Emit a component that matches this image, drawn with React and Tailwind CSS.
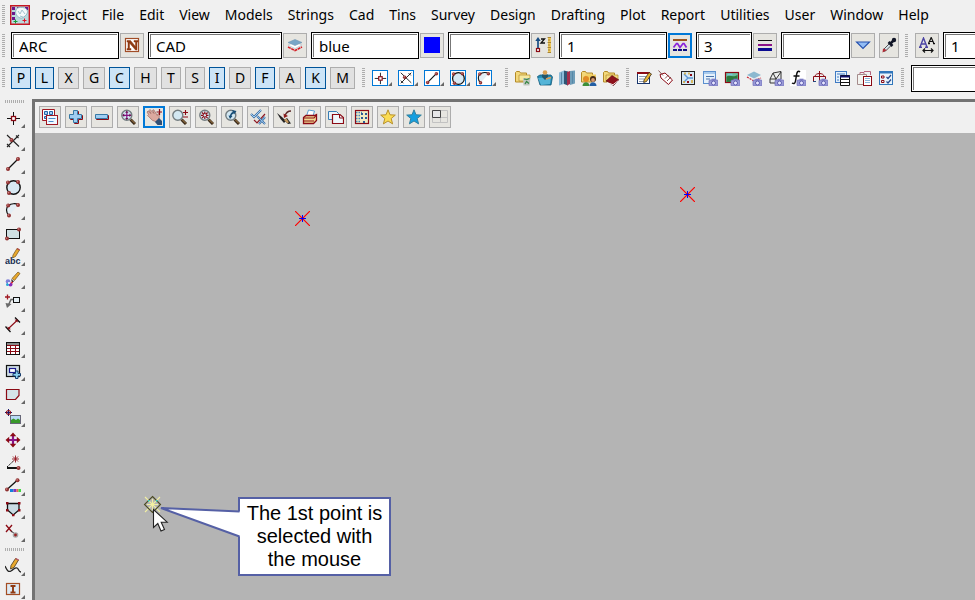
import clsx from 'clsx'

const menus = [
  'Project', 'File', 'Edit', 'View', 'Models', 'Strings', 'Cad', 'Tins', 'Survey',
  'Design', 'Drafting', 'Plot', 'Report', 'Utilities', 'User', 'Window', 'Help'
]

const snaps = [
  { key: 'P', on: true, width: 'w-5' },
  { key: 'L', on: true, width: 'w-[19px]' },
  { key: 'X', width: 'w-[21px]' },
  { key: 'G', width: 'w-[22px]' },
  { key: 'C', on: true, width: 'w-[21px]' },
  { key: 'H', width: 'w-[23px]' },
  { key: 'T', width: 'w-5' },
  { key: 'S', width: 'w-5' },
  { key: 'I', on: true, width: 'w-4' },
  { key: 'D', width: 'w-[22px]' },
  { key: 'F', on: true, width: 'w-5' },
  { key: 'A', width: 'w-[22px]' },
  { key: 'K', on: true, width: 'w-[21px]' },
  { key: 'M', width: 'w-[25px]' }
]

const RED = '#8b0a14'
const SKY = '#9fcdf2'

function Svg({ children, className = 'size-4', box = '0 0 16 16' }) {
  return (
    <svg viewBox={box} className={clsx('block shrink-0', className)} fill="none" aria-hidden="true">
      {children}
    </svg>
  )
}

function Dot({ x, y }) {
  return (
    <g>
      <circle cx={x} cy={y} r="2" fill="#8f3030" />
      <circle cx={x - 0.4} cy={y - 0.4} r="0.8" fill="#c98080" />
    </g>
  )
}

function Glass() {
  return (
    <g>
      <path d="M10.5 10.5 15 15" stroke="#3a2a1a" strokeWidth="3" />
      <path d="M11 10.5 15 14.5" stroke="#b58a50" strokeWidth="1" />
      <circle cx="6.8" cy="6.3" r="5" fill="#d3e8f2" stroke="#737d80" strokeWidth="1.4" />
    </g>
  )
}

function Camera() {
  return (
    <g>
      <rect x="7" y="10" width="9" height="6" rx="1" fill="#9a9ad8" stroke="#6c6cb4" strokeWidth=".7" />
      <rect x="9.5" y="8.7" width="4" height="1.5" fill="#7c7cc4" />
      <circle cx="11.5" cy="13" r="2" fill="#e6e6ff" stroke="#5555a8" strokeWidth=".9" />
    </g>
  )
}

function Folder() {
  return <path d="M.5 12V2.5l1-1h3l1 1.500h6V12Z" fill="#f3d87b" stroke="#b38a28" />
}

const icons = {
  // string creation
  point: (
    <g>
      <path d="M8.500 2v13M2 8.500h13" stroke="#111" />
      <rect x="6.500" y="6.500" width="4" height="4" fill="#fff" stroke={RED} strokeWidth="1.300" />
    </g>
  ),
  cross: (
    <g>
      <path d="m2 2 12 11.500M14 2 2 14M11 2.500l2.500 2.500M2 11l3 3" stroke="#222" strokeWidth="1.100" />
      <Dot x={6.5} y={7} />
    </g>
  ),
  line: (
    <g>
      <path d="m2.500 13.500 11-11" stroke="#111" strokeWidth="1.300" />
      <Dot x={3} y={13} />
      <Dot x={13} y={3} />
    </g>
  ),
  circle: (
    <g>
      <circle cx="8.500" cy="8.500" r="6.700" fill="#d8e9f3" stroke="#111" strokeWidth="1.400" />
      <Dot x={3} y={3.4} />
      <Dot x={13} y={3} />
      <Dot x={4} y={14} />
    </g>
  ),
  arc: (
    <g>
      <path d="M4 13C1 10 0.500 6 3.500 3.500S11 1 13 3L8 9Z" fill="#e4eef5" />
      <path d="M4 13.500C0.500 10 1 5.500 3.500 3.500S11 1 13 3" stroke="#111" strokeWidth="1.200" />
      <Dot x={3.2} y={3.4} />
      <Dot x={13} y={3} />
      <Dot x={4} y={13.5} />
    </g>
  ),
  rectangle: (
    <g>
      <rect x="1.500" y="4.500" width="13" height="9" fill="#cfe0e3" stroke="#111" />
      <Dot x={14} y={4.4} />
      <Dot x={2} y={13.6} />
    </g>
  ),
  text: (
    <g>
      <path d="m8 7 4-6.500 2.500 1.500-4 6.500L7.500 10Z" fill="#e9a92d" stroke="#70501c" strokeWidth=".7" />
      <path d="m11.500 1 1-1 2.500 1.500-.6 1Z" fill="#b04848" />
      <text x="0" y="15.500" fontFamily="Liberation Sans, sans-serif" fontSize="9" fontWeight="bold" fill="#152c50">abc</text>
    </g>
  ),
  brush: (
    <g>
      <path d="m7 7.500 6-6.500 2 1.500-5.500 7Z" fill="#e9a92d" stroke="#70501c" strokeWidth=".7" />
      <path d="m6 8 3 2.500-2 1Z" fill="#222" />
      <circle cx="3" cy="10.500" r="2.300" fill="#7f7fd8" />
      <circle cx="5.500" cy="13.500" r="2" fill="#8a2bb8" />
      <circle cx="2.500" cy="13.500" r="1.500" fill="#2aa7d8" />
      <circle cx="4" cy="12" r="1.100" fill="#fff" />
      <path d="M6 11.500h2" stroke="#d63a3a" strokeWidth="1.500" />
    </g>
  ),
  leader: (
    <g>
      <path d="M2.500.5v5M0 3h5" stroke="#a01822" strokeWidth="1.300" />
      <path d="M8.500 5.500H6L3 12" stroke="#666" strokeWidth="1.500" />
      <path d="m.5 9 6 1L2 14Z" fill="#6b6b6b" />
      <rect x="8.500" y="3.500" width="6" height="5" fill="#e6f0f5" stroke="#111" />
    </g>
  ),
  dimension: (
    <g>
      <path d="m.5 9.500 5 5.500M10 .5l5 5" stroke="#111" strokeWidth="1.300" />
      <path d="M3.500 11.500 12 3.500" stroke={RED} strokeWidth="1.100" />
      <path d="m2.500 9.500.5 3 3-.2zM12.800 5.500l-.3-3-3 .2z" fill={RED} />
    </g>
  ),
  grid: (
    <g>
      <rect x="1.500" y="2.500" width="13" height="12" fill="#fff" stroke="#111" />
      <path d="M2 4h12" stroke="#8a8a8a" strokeWidth="2" />
      <path d="M5.500 5v9M10.500 5v9M2 5.500h12M2 8.500h12M2 11.500h12" stroke={RED} />
    </g>
  ),
  insert: (
    <g>
      <rect x="1.500" y="2.500" width="13" height="11" fill="#cfdde6" stroke="#111" strokeWidth="1.200" />
      <rect x="4.500" y="5.500" width="6" height="4" fill="#fff" stroke="#1a1a8c" strokeWidth="1.200" />
      <path d="M10.500 8h2.500v2.500h2.500V13H13v2.500h-2.500V13H8v-2.500h2.500Z" fill="#8cd1ee" stroke="#173c6d" />
    </g>
  ),
  shape: (
    <path d="M1.500 3.500h12.500v6L10.500 13.500h-9Z" fill="#d5e3e8" stroke={RED} strokeWidth="1.200" />
  ),
  image: (
    <g>
      <path d="M3.500 0v7M0 3.500h7" stroke="#1a1a70" />
      <circle cx="3.500" cy="3.500" r="2" stroke={RED} strokeWidth="1.200" />
      <rect x="5.500" y="6.500" width="10" height="8" fill="#b9dcf7" stroke="#667" />
      <path d="M6 14v-3l2.500-1.500L11 11l2-1.500 2 1.500v3Z" fill="#38982a" />
    </g>
  ),
  move: (
    <g>
      <path d="M8 3v10M3 8h10" stroke="#8a1586" strokeWidth="2.200" />
      <path d="m8 .5 3.300 3.700H4.700ZM8 15.500l3.300-3.700H4.700ZM.5 8l3.700 3.300V4.700ZM15.500 8l-3.700 3.300V4.700Z" fill={RED} />
    </g>
  ),
  angle: (
    <g>
      <path d="M2 13h12" stroke="#111" strokeWidth="2" />
      <path d="m2 12 7-6.500" stroke="#111" strokeDasharray="2 1" />
      <path d="M10.500.5v7M7 4h7M8 1.500l5 5M13 1.500l-5 5" stroke="#941620" strokeWidth=".9" />
      <Dot x={13.5} y={13} />
    </g>
  ),
  colourLine: (
    <g>
      <path d="m2 11.500 10-9" stroke="#111" strokeWidth="1.300" />
      <Dot x={2} y={11.5} />
      <Dot x={12.5} y={2.3} />
      <path d="M5 12.500h3.500" stroke="#147fdb" strokeWidth="3" />
      <path d="M8.500 12.500h3" stroke="#8237b8" strokeWidth="3" />
      <path d="M11.500 12.500h2" stroke="#ed674b" strokeWidth="3" />
      <path d="M13.500 12.500H16" stroke="#42d742" strokeWidth="3" />
    </g>
  ),
  polygon: (
    <g>
      <path d="M2.500 2.500h11.500v6.500l-5.800 5-5.700-5Z" fill="#cadce4" stroke="#111" strokeWidth="1.300" />
      <path d="M1 1h2.500v2.500H1zM13 1h2.500v2.500H13zM1 8h2.500v2.500H1zM13 8h2.500v2.500H13zM7 13h2.500v2.300H7z" fill={RED} />
    </g>
  ),
  deletePoint: (
    <g>
      <path d="m1 1 6 7M7 1 1 8" stroke={RED} strokeWidth="1.300" />
      <path d="m6 7 4 3" stroke="#333" />
      <circle cx="10.500" cy="11" r="2.800" fill="#a7a7a7" />
      <circle cx="10.500" cy="11" r="1.400" fill="#9c2020" />
    </g>
  ),
  freehand: (
    <g>
      <path d="m6 7.500 4.500-7 3 1.500L9 9.500l-3.500 1.500Z" fill="#e9a92d" stroke="#493618" strokeWidth=".8" />
      <path d="m10 1 1-1 3 1.600-.8 1.200Z" fill="#b85a65" />
      <path d="M0 8c2 4 3 6.500 6 5s4-4 6-3 1.500 4 4 4" stroke="#222" strokeWidth="1.300" />
    </g>
  ),
  textBox: (
    <g>
      <rect x="1.500" y="2.500" width="13" height="11" fill="#ddeaf4" stroke="#a44d23" strokeWidth="1.200" />
      <path d="M5.500 5h5M8 5v7M5.500 11.500h5" stroke="#8f3a13" strokeWidth="1.900" />
    </g>
  ),

  // current settings
  name: (
    <g>
      <rect x="1.500" y="1.500" width="13" height="13" fill="#fff" stroke="#a14d27" strokeWidth="1.200" />
      <path d="M3 3.500h3.500l5 6V5H10V3.500h4V5h-1v8h-1.500L5.500 6v5.500H7V13H3v-1.500h1V5H3Z" fill="#8f3a13" stroke="#8f3a13" strokeWidth=".5" />
    </g>
  ),
  layers: (
    <g>
      <path d="M1 10 8 13.500l7-3.500" stroke="#d42028" strokeWidth="1.600" strokeDasharray="3 .6" />
      <path d="m1 8 7-3 7 3-7 3.500Z" fill="#fff" stroke="#b4c4d0" strokeWidth=".7" />
      <path d="m1 5.500 7-3 7 3-7 3Z" fill="#79a6c7" stroke="#7296b0" strokeWidth=".6" />
    </g>
  ),
  blue: <path d="M0 0h16v16H0z" fill="#0000ff" />,
  height: (
    <g>
      <path d="M3 3v9" stroke="#184d83" strokeWidth="1.700" />
      <path d="m3 0 2.700 4H.3Z" fill="#184d83" />
      <rect x="1.500" y="11.500" width="3" height="3" fill="#fff" stroke={RED} strokeWidth="1.200" />
      <path d="M6 2h3.500L6 6h4" stroke="#111" strokeWidth="1.300" />
      <path d="M13 0h3v16h-3z" fill="#edc75a" />
      <path d="M12.500.5H16M13 3h2M12.500 5.500H16M13 8h2M12.500 10.500H16M13 13h2M12.500 15.500H16" stroke="#8b6722" strokeWidth=".7" />
    </g>
  ),
  lineStyle: (
    <g>
      <path d="M1 3h14" stroke="#9a541f" strokeWidth="2" />
      <path d="m1.500 10.500 3-4h1l2.500 4 3-4h1l2.500 4" stroke="#8a22d8" strokeWidth="1.700" />
      <path d="M1 13h14" stroke="#101080" strokeWidth="2" strokeDasharray="4 1" />
    </g>
  ),
  weight: (
    <g>
      <path d="M1 3.500h14" stroke="#111" />
      <path d="M1 8h14" stroke="#8b1188" strokeWidth="2" />
      <path d="M1 12.500h14" stroke="#0a0a90" strokeWidth="3" />
    </g>
  ),
  dropDown: <path d="M1.500 5h13L8 11.500Z" fill="#93bdf5" stroke="#2551ae" strokeWidth="1.100" />,
  dropper: (
    <g>
      <path d="m3 12 6-6 1.800 1.800-6 6-2.300.7Z" fill="#d7e4eb" stroke="#555" />
      <path d="m7.500 5 4 4M9.500 6.500l3-3" stroke="#111627" strokeWidth="2.500" />
      <circle cx="13" cy="3" r="2.200" fill="#111627" />
      <path d="m1.500 15.500.5-4 4 1.500Z" fill="#b32b35" />
    </g>
  ),
  textSize: (
    <g>
      <path d="m1 10 3.500-9L8 10M2.200 7h4.600M0 10.200h3M6 10.200h3" stroke="#4b44a3" strokeWidth="1.400" />
      <path d="m9.500 6.500 2.700-6 2.700 6M10.500 4.500h3.500M9 6.700h2M14 6.700h2" stroke="#111" strokeWidth="1.200" />
      <path d="M4 13.500h10M6 11.500l-2 2 2 2M12 11.500l2 2-2 2" stroke="#111" strokeWidth="1.200" />
    </g>
  ),

  // project tools
  folderRecycle: (
    <g>
      <Folder />
      <path d="M4 5h11v3l-4 3H4Z" fill="#f6e9a0" stroke="#b38a28" strokeWidth=".7" />
      <path d="M8 8h7.500l-1 7.500H8.500Z" fill="#bfc6bf" />
      <path d="m9 9 3 .5 2.500-1M10 14l1.500-2.500 2.500 2" stroke="#31843f" strokeWidth="1.200" />
    </g>
  ),
  folderUser: (
    <g>
      <path d="M.5 6.500 3 5h11l1.500 2-1.500 8H3Z" fill="#2389b2" stroke="#145b7a" strokeWidth=".8" />
      <path d="m1 8 13-1-1 7-9 1Z" fill="#54b4d7" />
      <path d="M5 7V4.500h6V7l-3 3Z" fill="#24566b" />
      <circle cx="8" cy="2.500" r="2.300" fill="#dba052" />
      <path d="m9 9 5-1.500" stroke="#df9952" strokeWidth="1.500" />
    </g>
  ),
  books: (
    <g>
      <path d="m0 2.500 5-2V14l-5 1.500Z" fill="#8ebcd8" />
      <path d="m5 .5 4 1v14L5 14Z" fill="#2f5674" />
      <path d="m8 2 3-1v13l-3 1.500Z" fill="#a42e4c" />
      <path d="m11 1 5-.5v13l-5 1.500Z" fill="#6f9db8" />
      <path d="M2.500 2.500V14M13.500 1.500v12" stroke="#5688a8" />
    </g>
  ),
  folderPeople: (
    <g>
      <Folder />
      <path d="M4 4.500h11v6H4Z" fill="#f2cf63" />
      <circle cx="5" cy="9" r="3" fill="#e08b26" />
      <circle cx="12" cy="9" r="3" fill="#452919" />
      <circle cx="12" cy="10" r="1.900" fill="#d69970" />
      <path d="M1.500 16c0-5 7-5 7 0Z" fill="#3d8f38" />
      <path d="M8.500 16c0-5 7-5 7 0Z" fill="#245fa4" />
    </g>
  ),
  folderBook: (
    <g>
      <Folder />
      <path d="M3 5h12v6H3Z" fill="#f4da80" stroke="#b38a28" strokeWidth=".7" />
      <path d="m3 11 6-5.500 7 4.500-5.500 5.500Z" fill="#8d111b" stroke="#52060c" strokeWidth=".6" />
      <path d="m4 12.500 6 2.200 5.500-4.200" stroke="#fff" strokeWidth=".9" />
    </g>
  ),
  edit: (
    <g>
      <rect x="1.500" y="2.500" width="12" height="11" fill="#fff" stroke="#19366c" />
      <path d="M1 3h13" stroke={RED} strokeWidth="2" />
      <path d="M3 6.500h7M3 9h5M3 11.500h5" stroke="#8d9ab0" />
      <path d="m8 10 5-7.500 2.500 1.500-5 7.500-2.800 1Z" fill="#e9b634" stroke="#382b1c" strokeWidth=".8" />
    </g>
  ),
  tag: (
    <g>
      <path d="M2 4.500 7 3l7.500 7-4 4.500L3 8Z" fill="#fff" stroke={RED} />
      <path d="M.5.5 5 5.500M7 8.500l3.500-3.500M9 11l4-4" stroke="#6b3430" strokeWidth=".8" />
    </g>
  ),
  mapPoints: (
    <g>
      <rect x="1.500" y="1.500" width="13" height="13" fill="#d6e8f4" stroke="#222" />
      <path d="m4 4 4 4-4 4M8 8h5" stroke="#5b97d4" strokeWidth="1.400" />
      <path d="M5 2.500v2M9 2.500v2M12 10v3M4 11v2" stroke="#d8a72c" strokeWidth="1.500" />
      <path d="M10 4h2v2h-2zM7 11h2v2H7z" fill={RED} />
    </g>
  ),
  viewCamera: (
    <g>
      <rect x="1.500" y="1.500" width="12" height="12" fill="#e5f1fb" stroke="#5a8fce" />
      <path d="M1.500 3h12" stroke="#6ba3df" />
      <path d="M4 6.500h8M4 9h4" stroke="#4a74ac" />
      <Camera />
    </g>
  ),
  imageCamera: (
    <g>
      <rect x="1.500" y="2.500" width="13" height="10" fill="#6cc0a0" stroke={RED} strokeWidth="1.200" />
      <path d="M2.500 7c3-3 6 1 11-2v7h-11Z" fill="#2d7a3d" />
      <path d="M3.500 4.500h5" stroke="#79c4df" strokeWidth="1.500" />
      <Camera />
    </g>
  ),
  layerCamera: (
    <g>
      <path d="m1 7 7 4 7-3" stroke="#c82430" strokeWidth="1.200" strokeDasharray="2 1" />
      <path d="m1 5 7-3.500L15 5 8 8.500Z" fill="#8cb9d0" />
      <Camera />
    </g>
  ),
  meshCamera: (
    <g>
      <path d="m2 9 3-6 8-1.500V9l-5 4H2Zm0 0h6l5-7M5 3l3 6v4" fill="#e9ece9" stroke="#333" />
      <Camera />
    </g>
  ),
  functionCamera: (
    <g>
      <path d="M0 0h16v16H0z" fill="#fff" />
      <path d="M10 2C8 0 7 2 6.500 5l-1 6C5 14 3.500 14 2 13M3.500 6h6" stroke="#111" strokeWidth="1.500" />
      <Camera />
    </g>
  ),
  scaleCamera: (
    <g>
      <path d="M7.500 1v10M1.500 11V6.500h12V9M3 6.500c0-4 9-4 9 0" stroke={RED} />
      <path d="M1 11.500h3" stroke="#26497e" />
      <Camera />
    </g>
  ),
  listPanel: (
    <g>
      <rect x="1.500" y="1.500" width="11" height="11" fill="#e5f1fb" stroke="#407ac3" />
      <path d="M3 4h8M3 7h2M3 10h2" stroke="#407ac3" />
      <path d="M6.500 5.500h9v10h-9z" fill="#fff" stroke="#111" />
      <path d="M6 6.500h10" stroke="#11116a" strokeWidth="2" />
      <path d="M7 9.500h8M7 12.500h8" stroke="#111" />
    </g>
  ),
  clipboard: (
    <g>
      <path d="M1.500 4.500h9v10h-9Z" fill="#f3f3ef" stroke="#a58c8c" />
      <path d="M4 4V2.500h4V4M8 1.500h6.500V5" stroke="#b4647c" />
      <rect x="7.500" y="6.500" width="8" height="9" fill="#fff" stroke={RED} />
      <path d="M9 8.500h5M9 10.500h5M9 12.500h5" stroke="#8bb6da" />
    </g>
  ),
  checklist: (
    <g>
      <rect x="1.500" y="1.500" width="13" height="13" fill="#eaf4fb" stroke="#3076bb" />
      <path d="M1 2.500h14" stroke="#3076bb" strokeWidth="2" />
      <path d="M3.500 6h2.500v2H3.500zM3.500 10.500h2.500v2H3.500z" stroke={RED} />
      <path d="m8.500 7 1.500 1.500L13 5M8.500 11.500 10 13l3-3.500" stroke="#25468b" strokeWidth="1.200" />
    </g>
  ),

  // view tools
  menu: (
    <g>
      <path d="M.5.5h12v11H.5z" fill="#fff" stroke="#a01822" />
      <path d="M2.500 2.500h3v3h-3zM7.500 2.500h3v3h-3zM2.500 7.500h3v2h-3z" fill={SKY} stroke="#2364a5" />
      <rect x="4.500" y="6.500" width="11" height="9" fill="#f0f8ff" stroke="#a01822" />
      <path d="M6.500 9.500h7M6.500 12.500h5" stroke="#4a8bca" />
    </g>
  ),
  plus: (
    <g>
      <path d="M6.500 2.500h4v4h4v4h-4v4h-4v-4h-4v-4h4Z" stroke={RED} />
      <path d="M5.500 1.500h4v4h4v4h-4v4h-4v-4h-4v-4h4Z" fill={SKY} stroke="#3779a5" />
    </g>
  ),
  minus: (
    <g>
      <path d="M2.500 6.500h12v4h-12z" stroke={RED} />
      <path d="M1.500 5.500h12v4h-12z" fill={SKY} stroke="#3779a5" />
    </g>
  ),
  zoomFit: (
    <g>
      <Glass />
      <path d="M6.800 2.500v7.600M3 6.300h7.600" stroke="#861383" strokeWidth="1.200" />
      <path d="m6.800 1.700 1.700 2H5.100ZM6.800 11l1.700-2H5.100ZM2.200 6.300l2 1.700V4.600ZM11.400 6.300l-2 1.700V4.600Z" fill="#6b1050" />
    </g>
  ),
  pan: (
    <g>
      <path d="m1 3 1-1 3 2.500L3 1.500l1-1 4 4L6.500 1.300l1.200-.6 3.600 5.800.8-2 1.300.6-.4 5-3 2.600-3.500-1.300-5-5 1-1Z" fill="#dca99f" stroke="#98665f" strokeWidth=".7" />
      <path d="m9 13 4-4 3 3v4h-4.500Z" fill="#304f75" />
      <path d="M13.500 0v6M10.500 3h6" stroke={RED} strokeWidth="1.200" />
    </g>
  ),
  zoomInOut: (
    <g>
      <g transform="translate(-1 0)"><Glass /></g>
      <path d="M11 3.500h5M13.500 1v5M11 8h5" stroke={RED} strokeWidth="1.100" />
    </g>
  ),
  zoomExtent: (
    <g>
      <Glass />
      <path d="m4 3.500 2 2M9.600 3.500l-2 2M4 9.100l2-2M9.600 9.100l-2-2M6.800 2.500v2.500M6.800 7.600v2.500M3 6.300h2.500M8 6.300h2.500" stroke={RED} strokeWidth="1.200" />
    </g>
  ),
  zoomPrevious: (
    <g>
      <Glass />
      <path d="M6.500 8c0-2 .5-3.500 3-4.500" stroke="#174d76" strokeWidth="1.500" />
      <path d="m8 1 4.500 1L10 5.500ZM4.500 6.500l4 .5-2.500 3Z" fill="#174d76" />
    </g>
  ),
  ticks: (
    <g>
      <path d="m1 5 3 3 7-7" stroke="#3b6ea5" strokeWidth="2.200" />
      <path d="m1 5 3 3 7-7" stroke="#9fcdf2" />
      <path d="m4 11 3 3 8-9" stroke="#8d1822" strokeWidth="1.200" />
      <path d="m7 7 8 8M15 8l-6 7" stroke="#3b6ea5" strokeWidth="2" />
      <path d="m7 7 8 8M15 8l-6 7" stroke="#9fcdf2" strokeWidth=".8" />
    </g>
  ),
  paint: (
    <g>
      <path d="m1 4 5 4 4 4-2 2-3.500-4Z" fill="#242424" />
      <path d="m8 11 3-2 4 5.500-3 .5Z" fill="#222" />
      <path d="m8 11 2.500-1.500 2.500 4-2 .5Z" fill="#c59a60" />
      <path d="M15 2c-3 0-5 1.500-6 5" stroke="#5d2a2a" strokeWidth="1.300" />
      <path d="M7.500 4.500 8 9l4-2Z" fill="#8d1a1a" />
    </g>
  ),
  print: (
    <g>
      <path d="m4.500 7 2-6 6 1-1.500 5Z" fill="#fff" stroke="#5b9fd0" />
      <path d="M1.500 8.500 4 6.500h8.500l2-1v6l-3 3h-10Z" fill="#f1dc92" stroke={RED} strokeWidth="1.300" />
      <path d="M2 9h10l2-2.500M2 12h10" stroke={RED} strokeWidth="1.200" />
    </g>
  ),
  copyView: (
    <g>
      <path d="M.5 2.500h8l2 2v6h-10Z" fill="#e8f3fa" stroke="#367cb5" />
      <path d="M4.500 5.500h7.500l3.500 3v6h-11Z" fill="#eef6fb" stroke={RED} strokeWidth="1.200" />
      <path d="M11.500 6v3H15" stroke={RED} />
    </g>
  ),
  building: (
    <g>
      <rect x="1.500" y="1.500" width="13" height="13" fill="#f1ecc4" stroke={RED} strokeWidth="1.200" />
      <path d="M2 3.500h6M2 6.500h4M2 9.500h4M2 12.500h4" stroke="#4885be" strokeWidth="1.500" strokeDasharray="1.500 1" />
      <path d="M7 4h2v2H7zM11 4h2v2h-2zM7 8h2v2H7zM11 8h2v2h-2zM9 12h2v2H9z" fill="#2d5c94" />
    </g>
  ),
  starYellow: (
    <path d="m8 .8 2 5 5.300.3-4.100 3.400 1.400 5.400L8 12l-4.600 2.900 1.400-5.400L.7 6.100 6 5.800Z" fill="#fbdc53" stroke="#b7912d" />
  ),
  starBlue: (
    <path d="m8 .8 2 5 5.300.3-4.100 3.400 1.400 5.400L8 12l-4.600 2.900 1.400-5.400L.7 6.100 6 5.800Z" fill="#159fdf" stroke="#32819f" />
  ),
  panes: (
    <g>
      <path d="M.5 1.500h15v12H.5ZM8.500 1.500v12M.5 8.500h15" stroke="#c2c2c2" />
      <path d="M.5 1.500h8v7h-8z" fill="#e7e7e7" stroke="#454545" />
    </g>
  )
}

const settings = [
  { label: 'Name', value: 'ARC', width: 'w-[108px]', icon: 'name' },
  { label: 'Model', value: 'CAD', width: 'w-[134px]', icon: 'layers' },
  { label: 'Colour', value: 'blue', width: 'w-[108px]', icon: 'blue' },
  { label: 'Height', value: '', width: 'w-[82px]', icon: 'height' },
  { label: 'Line style', value: '1', width: 'w-[108px]', icon: 'lineStyle', active: true },
  { label: 'Weight', value: '3', width: 'w-14', icon: 'weight' },
  { label: 'Tinable', value: '', width: 'w-[69px]', icon: 'dropDown' }
]

const cadTools = [
  'point', 'cross', 'line', 'circle', 'arc', 'rectangle', 'text', 'brush', 'leader', 'dimension',
  'grid', 'insert', 'shape', 'image', 'move', 'angle', 'colourLine', 'polygon', 'deletePoint'
]

const projectTools = ['folderRecycle', 'folderUser', 'books', 'folderPeople', 'folderBook']

const panelTools = [
  'edit', 'tag', 'mapPoints', 'viewCamera', 'imageCamera', 'layerCamera', 'meshCamera',
  'functionCamera', 'scaleCamera', 'listPanel', 'clipboard', 'checklist'
]

const viewTools = [
  'menu', 'plus', 'minus', 'zoomFit', 'pan', 'zoomInOut', 'zoomExtent', 'zoomPrevious',
  'ticks', 'paint', 'print', 'copyView', 'building', 'starYellow', 'starBlue', 'panes'
]

function Handle({ className }) {
  return (
    <div
      className={clsx(
        'h-5 w-[3px] shrink-0 bg-[repeating-linear-gradient(to_bottom,#adadad_0_1px,transparent_1px_2px)]',
        className
      )}
    />
  )
}

function HandleAcross() {
  return <div className="ml-[5px] h-[3px] w-[19px] shrink-0 bg-[repeating-linear-gradient(to_right,#adadad_0_1px,transparent_1px_2px)]" />
}

function Field({ label, value, width }) {
  return (
    <div className={clsx('h-[27px] shrink-0 border border-black bg-white p-px', width)}>
      <input
        aria-label={label}
        defaultValue={value}
        className="block h-full w-full border-t border-l border-[#777] bg-white px-[5px] text-[15px] leading-5 outline-none"
      />
    </div>
  )
}

function ToolButton({ icon, active, className }) {
  return (
    <button
      aria-label={icon}
      className={clsx(
        'flex shrink-0 items-center justify-center bg-[#e6e5e0]',
        active ? 'border-2 border-[#0078d7]' : 'border border-[#adadad]',
        className
      )}
    >
      <Svg>{icons[icon]}</Svg>
    </button>
  )
}

function Corner() {
  return (
    <Svg className="size-1" box="0 0 4 4">
      <path d="M4 0v4H0Z" fill="#666" />
    </Svg>
  )
}

function SideTool({ icon }) {
  return (
    <button aria-label={icon} className="flex h-[23px] w-full shrink-0 items-end pb-[2px] pl-[5px]">
      <Svg className="mb-[2px] size-4">{icons[icon]}</Svg>
      <Corner />
    </button>
  )
}

function AppLogo() {
  return (
    <Svg className="ml-[5px] size-5" box="0 0 20 20">
      <path d="M.7.7h18.600v18.600H.7z" fill="#b9d8dc" stroke="#c51622" strokeWidth="1.400" />
      <path d="M2 2h3v3H2zM2 7h3v3H2zM2 12h3v3H2zM7 2h2v3H7zM15 2h3v3h-3z" fill="#6b168b" />
      <path d="M6 5c0-3 9-4 11 0s-3 7-5 8-8-3-6-8Z" fill="#f4fafa" stroke="#91b9c5" />
      <path d="m8 6 2 3 2-4 3 4M10 11l3 1" stroke="#a0c4d0" />
      <path d="M5.500 14.500v4M3.500 16.500h4" stroke="#159b38" />
      <path d="M14.500 13.500v4M12.500 15.500h4" stroke="#e11224" />
    </Svg>
  )
}

function SurveyPoint({ className }) {
  return (
    <Svg className={clsx('absolute size-[15px]', className)} box="0 0 15 15">
      <path d="m0 0 15 15M15 0 0 15" stroke="#ff0000" strokeWidth="1.200" />
      <path d="M7.500 4v7M4 7.500h7" stroke="#0000ff" />
    </Svg>
  )
}

function Callout() {
  return (
    <div className="absolute top-[364px] left-[203px]">
      <div className="w-[153px] border-2 border-[#5560a5] bg-white px-[6px] py-[3px] text-center font-['Liberation_Sans',sans-serif] text-xl leading-[23px] text-black">
        The 1st point is selected with the mouse
      </div>
      <Svg className="absolute top-[9px] -left-[78px] h-[34px] w-20" box="0 0 80 34">
        <path d="M80 5.500 1 2l79 28.500Z" fill="#fff" />
        <path d="M79.500 5.500 1 2l78.500 28.500" stroke="#5560a5" strokeWidth="2" />
      </Svg>
    </div>
  )
}

function MousePick() {
  return (
    <Svg className="absolute top-[362px] left-[108px] h-10 w-7" box="0 0 28 40">
      <path d="m2 2 15 15M17 2 2 17M9.500 4v11M4 9.500h11" stroke="#f2f0a2" strokeWidth="1.100" />
      <path d="m9.500 1.500 8 8-8 8-8-8Z" stroke="#4c4b24" strokeWidth="1.100" />
      <path d="M5 5h1.500v1.500H5zM13 5h1.500v1.500H13z" fill="#28d5bd" />
      <path d="M10.500 14.500v18l4.300-4 3.200 7.500 3.500-1.500-3.300-7.300h6Z" fill="#fff" stroke="#222" strokeWidth="1.100" />
    </Svg>
  )
}

export default function App() {
  return (
    <div className="flex h-screen flex-col overflow-hidden bg-[#f0f0f0] font-['Noto_Sans','Open_Sans',sans-serif] text-black">
      <header className="flex h-[99px] shrink-0 flex-col overflow-hidden">
        <nav className="flex h-[29px] shrink-0 items-center pl-[2px]">
          <Handle />
          <AppLogo />
          <div className="ml-[11px] flex gap-[15px] text-sm leading-5">
            {menus.map((m) => (
              <button key={m}>{m}</button>
            ))}
          </div>
        </nav>

        <div className="flex h-8 shrink-0 items-center pl-[2px]">
          <Handle className="mr-[6px] h-[23px]" />
          <div className="flex gap-1">
            {settings.map((s) => (
              <div key={s.label} className="flex items-center gap-px">
                <Field label={s.label} value={s.value} width={s.width} />
                <ToolButton icon={s.icon} active={s.active} className="h-[25px] w-6" />
              </div>
            ))}
            <ToolButton icon="dropper" className="mt-px h-[25px] w-5" />
          </div>
          <Handle className="ml-[6px] h-[23px]" />
          <ToolButton icon="textSize" className="mr-1 ml-[7px] h-[25px] w-6" />
          <Field label="Text size" value="1" width="w-[108px]" />
        </div>

        <div className="flex h-[34px] shrink-0 items-center pl-[2px]">
          <Handle className="mr-[6px]" />
          <div className="flex shrink-0 gap-1">
            {snaps.map((s) => (
              <button
                key={s.key}
                aria-pressed={!!s.on}
                className={clsx(
                  'flex h-[22px] shrink-0 items-center justify-center border text-sm leading-5',
                  s.width,
                  s.on ? 'border-[#005499] bg-[#cce4f7]' : 'border-[#adadad] bg-[#e1e1e1]'
                )}
              >
                {s.key}
              </button>
            ))}
          </div>
          <Handle className="mx-[7px]" />
          <div className="flex shrink-0 gap-[6px]">
            {cadTools.slice(0, 5).map((t) => (
              <button key={t} aria-label={t + ' snap'} className="flex items-end">
                <span className="border border-[#0078d7] bg-white">
                  <Svg className="size-[14px]">{icons[t]}</Svg>
                </span>
                <Corner />
              </button>
            ))}
          </div>
          <Handle className="mx-[7px] ml-[9px]" />
          <div className="flex shrink-0 gap-[6px]">
            {projectTools.map((t) => (
              <button key={t} aria-label={t}>
                <Svg>{icons[t]}</Svg>
              </button>
            ))}
          </div>
          <Handle className="mx-[7px]" />
          <div className="flex shrink-0 gap-[6px]">
            {panelTools.map((t) => (
              <button key={t} aria-label={t}>
                <Svg>{icons[t]}</Svg>
              </button>
            ))}
          </div>
          <Handle className="mx-[7px]" />
          <Field label="Search" value="" width="w-[134px]" />
        </div>
      </header>

      <div className="flex min-h-0 flex-1">
        <aside className="flex w-8 shrink-0 flex-col overflow-hidden pt-px">
          <HandleAcross />
          <div className="my-1 flex flex-col">
            {cadTools.map((t) => (
              <SideTool key={t} icon={t} />
            ))}
          </div>
          <HandleAcross />
          <div className="mt-1 flex flex-col">
            <SideTool icon="freehand" />
            <SideTool icon="textBox" />
          </div>
        </aside>

        <main className="flex min-w-0 flex-1 flex-col border-t-3 border-l-3 border-[#737373]">
          <div className="shrink-0 bg-[#f0f0f0] px-1 pt-1 pb-[5px]">
            <div className="flex gap-1">
              {viewTools.map((t) => (
                <ToolButton key={t} icon={t} active={t === 'pan'} className="size-[22px]" />
              ))}
            </div>
          </div>
          <div className="relative min-h-0 flex-1 overflow-hidden bg-[#b4b4b4]">
            <SurveyPoint className="top-[78px] left-[260px]" />
            <SurveyPoint className="top-[54px] left-[645px]" />
            <Callout />
            <MousePick />
          </div>
        </main>
      </div>
    </div>
  )
}
